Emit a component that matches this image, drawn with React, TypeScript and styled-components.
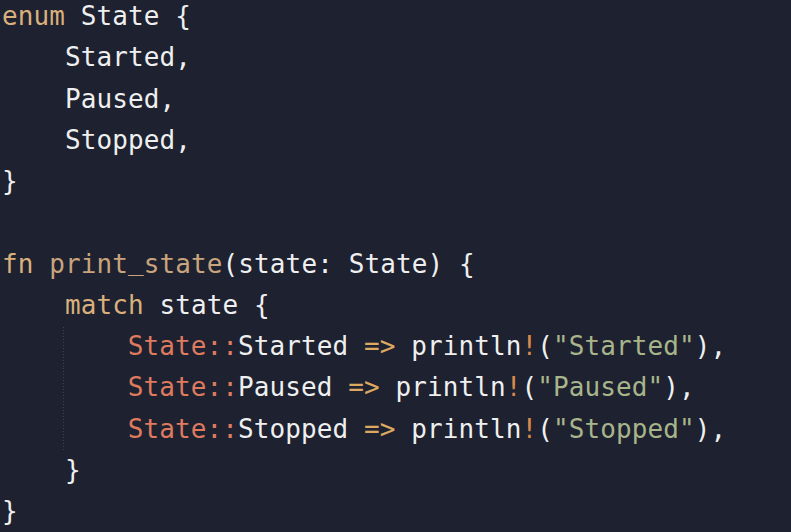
import React from "react";
import styled, { createGlobalStyle } from "styled-components";

const Global = createGlobalStyle`
  html, body {
    margin: 0;
    padding: 0;
    background: #1d2130;
  }
  body {
    width: 791px;
    height: 532px;
    overflow: hidden;
  }
`;

const Editor = styled.pre`
  margin: 0;
  padding: 0 0 0 2px;
  margin-top: -4px;
  background: #1d2130;
  color: #efefef;
  font-family: "DejaVu Sans Mono", "Liberation Mono", monospace;
  font-size: 26px;
  letter-spacing: 0.1px;
  line-height: 41.25px;
  white-space: pre;
`;

const Line = styled.div`
  min-height: 41px;
`;

const Guide = styled.span`
  display: inline-block;
  width: 4ch;
  height: 41px;
  margin-left: -2px;
  padding-left: 2px;
  vertical-align: top;
  background-image: linear-gradient(#3d4355 50%, transparent 50%);
  background-size: 1px 3px;
  background-repeat: repeat-y;
  background-position: 0 4px;
`;

type Kind = "kw" | "fn" | "type" | "op" | "macro" | "str";

const colors: Record<Kind, string> = {
  kw: "#d9b07b",
  fn: "#c9a47c",
  type: "#df7a5e",
  op: "#dda860",
  macro: "#da8b4a",
  str: "#a8b58b",
};

const Tok = styled.span<{ $k: Kind }>`
  color: ${(p) => colors[p.$k]};
`;

const Underscore = styled.span`
  display: inline-block;
  vertical-align: 3px;
  line-height: 1;
`;

const Arm = ({ name }: { name: string }) => (
  <Line>
    {"    "}
    <Guide>{"    "}</Guide>
    <Tok $k="type">State::</Tok>
    {name} <Tok $k="op">=&gt;</Tok> println<Tok $k="macro">!</Tok>(
    <Tok $k="str">"{name}"</Tok>),
  </Line>
);

export default function App() {
  return (
    <>
      <Global />
      <Editor>
        <Line>
          <Tok $k="kw">enum</Tok> State {"{"}
        </Line>
        <Line>{"    "}Started,</Line>
        <Line>{"    "}Paused,</Line>
        <Line>{"    "}Stopped,</Line>
        <Line>{"}"}</Line>
        <Line> </Line>
        <Line>
          <Tok $k="kw">fn</Tok>{" "}
          <Tok $k="fn">
            print<Underscore>_</Underscore>state
          </Tok>
          (state: State) {"{"}
        </Line>
        <Line>
          {"    "}
          <Tok $k="kw">match</Tok> state {"{"}
        </Line>
        <Arm name="Started" />
        <Arm name="Paused" />
        <Arm name="Stopped" />
        <Line>{"    }"}</Line>
        <Line>{"}"}</Line>
      </Editor>
    </>
  );
}
